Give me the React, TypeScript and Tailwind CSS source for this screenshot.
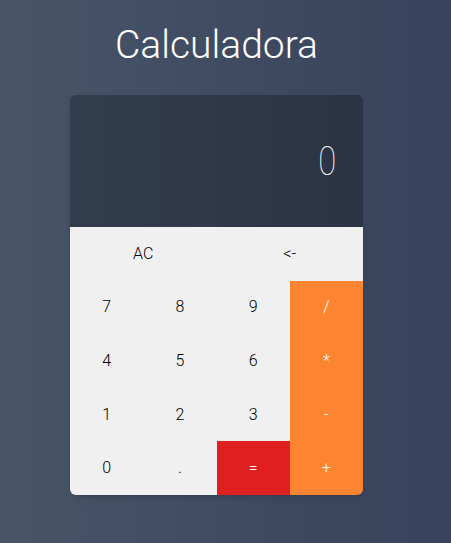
import React, { useState } from 'react';

const DIGIT = 'bg-[#f0f0f0] text-black';
const OP = 'bg-[#fd8532] text-white';

export default function App() {
  const [display, setDisplay] = useState('0');

  const press = (k: string) => {
    if (k === 'AC') return setDisplay('0');
    if (k === '<-') return setDisplay(d => (d.length > 1 ? d.slice(0, -1) : '0'));
    if (k === '=') {
      try {
        // eslint-disable-next-line no-new-func
        setDisplay(String(Function(`return (${display})`)()));
      } catch {
        setDisplay('0');
      }
      return;
    }
    setDisplay(d => (d === '0' && k !== '.' ? k : d + k));
  };

  const rows: [string, string][][] = [
    [['7', DIGIT], ['8', DIGIT], ['9', DIGIT], ['/', OP]],
    [['4', DIGIT], ['5', DIGIT], ['6', DIGIT], ['*', OP]],
    [['1', DIGIT], ['2', DIGIT], ['3', DIGIT], ['-', OP]],
    [['0', DIGIT], ['.', DIGIT], ['=', 'bg-[#e02020] text-white'], ['+', OP]],
  ];

  return (
    <div
      className="min-h-screen w-full flex flex-col items-center pr-[18px] bg-gradient-to-r from-[#485568] to-[#38425c]"
      style={{ fontFamily: 'Roboto, "Open Sans", sans-serif' }}
    >
      <h1 className="mt-[20px] text-[39px] leading-[50px] font-light text-white">Calculadora</h1>

      {/* Calculator card */}
      <div className="mt-[25px] w-[293px] rounded-md overflow-hidden shadow-md">
        <div className="h-[132px] flex items-center justify-end pr-[25px] bg-gradient-to-r from-[#323e4d] to-[#2c3344]">
          <span className="text-[41px] font-thin text-white leading-none scale-x-[0.8]">{display}</span>
        </div>

        <div className="grid grid-cols-4 text-[16px] font-light">
          <button
            onClick={() => press('AC')}
            className="col-span-2 h-[53.6px] bg-[#f0f0f0] text-black"
          >
            AC
          </button>
          <button
            onClick={() => press('<-')}
            className="col-span-2 h-[53.6px] bg-[#f0f0f0] text-black"
          >
            &lt;-
          </button>
          {rows.flat().map(([k, cls]) => (
            <button key={k} onClick={() => press(k)} className={`h-[53.6px] ${cls}`}>
              {k}
            </button>
          ))}
        </div>
      </div>
    </div>
  );
}
